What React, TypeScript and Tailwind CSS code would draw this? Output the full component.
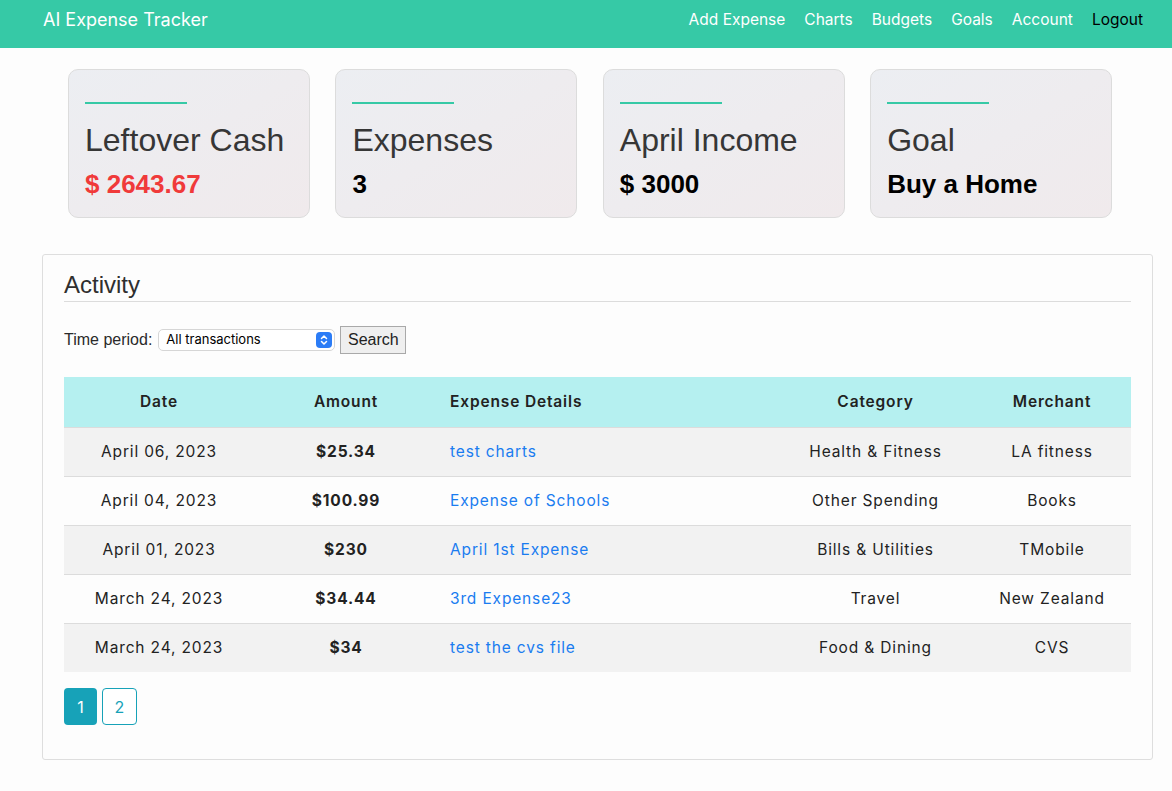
import React from 'react';

type Expense = {
  date: string;
  amount: string;
  details: string;
  category: string;
  merchant: string;
};

const expenses: Expense[] = [
  { date: 'April 06, 2023', amount: '$25.34', details: 'test charts', category: 'Health & Fitness', merchant: 'LA fitness' },
  { date: 'April 04, 2023', amount: '$100.99', details: 'Expense of Schools', category: 'Other Spending', merchant: 'Books' },
  { date: 'April 01, 2023', amount: '$230', details: 'April 1st Expense', category: 'Bills & Utilities', merchant: 'TMobile' },
  { date: 'March 24, 2023', amount: '$34.44', details: '3rd Expense23', category: 'Travel', merchant: 'New Zealand' },
  { date: 'March 24, 2023', amount: '$34', details: 'test the cvs file', category: 'Food & Dining', merchant: 'CVS' },
];

const SummaryCard: React.FC<{ title: string; value: string; valueClass?: string }> = ({ title, value, valueClass }) => (
  <div className="w-[242px] h-[149px] rounded-[10px] border border-[#dcdcdc] bg-gradient-to-br from-[#eceef2] to-[#f0eaec] px-[16px] pt-[32px]">
    <div className="w-[102px] h-[2px] bg-[#36c9a6]" />
    <h3 className="mt-[18px] text-[32px] leading-[36px] text-[#363636]">{title}</h3>
    <p className={`mt-[11px] text-[26px] leading-[30px] font-bold ${valueClass ?? 'text-black'}`}>{value}</p>
  </div>
);

export default function App() {
  return (
    <div className="min-h-[791px] bg-[#fdfdfd] font-['Liberation_Sans',Arial,sans-serif]">
      <nav className="h-[48px] bg-[#36c9a6] flex items-center justify-between pl-[43px] pr-[29px]">
        <a className="text-white text-[18px] font-['Inter',sans-serif] -mt-[9px]">AI Expense Tracker</a>
        <ul className="flex gap-[19px] text-[15.5px] font-['Inter',sans-serif] -mt-[8px]">
          <li className="text-white">Add Expense</li>
          <li className="text-white">Charts</li>
          <li className="text-white">Budgets</li>
          <li className="text-white">Goals</li>
          <li className="text-white">Account</li>
          <li className="text-black">Logout</li>
        </ul>
      </nav>

      <div className="flex gap-[25.4px] pl-[68px] mt-[21px]">
        <SummaryCard title="Leftover Cash" value="$ 2643.67" valueClass="text-[#f03a3a]" />
        <SummaryCard title="Expenses" value="3" />
        <SummaryCard title="April Income" value="$ 3000" />
        <SummaryCard title="Goal" value="Buy a Home" />
      </div>

      <section className="mx-[42px] mt-[36px] w-[1111px] h-[506px] border border-[#dedede] rounded-[3px] bg-[#fdfdfd] px-[21px] pt-[15px]">
        <h2 className="text-[24px] leading-[29px] text-[#2f2f2f] pb-[2px] border-b border-[#dcdcdc]">Activity</h2>

        <div className="flex items-center mt-[24px] text-[16px] text-[#2a2a2a]">
          <span className="mr-[6px]">Time period:</span>
          <div className="relative w-[177px] h-[22px] rounded-[5px] border border-[#d6d6d6] bg-white flex items-center pl-[7px] text-[13px] text-black font-['Inter',sans-serif]">
            All transactions
            <span className="absolute right-[2px] top-[2px] w-[16px] h-[16px] rounded-[4px] bg-[#2b7cf6] flex items-center justify-center">
              <svg width="8" height="12" viewBox="0 0 8 12" fill="none" stroke="white" strokeWidth="1.5" strokeLinecap="round" strokeLinejoin="round">
                <path d="M1.5 4.5 L4 2 L6.5 4.5" />
                <path d="M1.5 7.5 L4 10 L6.5 7.5" />
              </svg>
            </span>
          </div>
          <button className="ml-[5px] h-[28px] w-[66px] border border-[#a9a9a9] bg-[#efefef] text-[16px] text-[#222]">Search</button>
        </div>

        <table className="mt-[23px] w-[1067px] border-collapse font-['Inter',sans-serif] text-[15.5px] tracking-[0.85px] text-[#222]">
          <thead>
            <tr className="h-[50px] bg-[#b5f0f0] border-b border-[#dcdcdc]">
              <th className="w-[190px] font-semibold text-center">Date</th>
              <th className="w-[184px] font-semibold text-center">Amount</th>
              <th className="w-[340px] font-semibold text-left pl-[12px]">Expense Details</th>
              <th className="w-[195px] font-semibold text-center">Category</th>
              <th className="font-semibold text-center">Merchant</th>
            </tr>
          </thead>
          <tbody>
            {expenses.map((e, i) => (
              <tr key={i} className={`h-[49px] ${i % 2 === 0 ? 'bg-[#f2f2f2]' : 'bg-[#fdfdfd]'} ${i < expenses.length - 1 ? 'border-b border-[#dcdcdc]' : ''}`}>
                <td className="text-center">{e.date}</td>
                <td className="text-center font-bold">{e.amount}</td>
                <td className="text-left pl-[12px] text-[#1a7cf0]">{e.details}</td>
                <td className="text-center">{e.category}</td>
                <td className="text-center">{e.merchant}</td>
              </tr>
            ))}
          </tbody>
        </table>

        <div className="flex gap-[5px] mt-[16px] font-['Inter',sans-serif] text-[16px]">
          <button className="w-[33px] h-[37px] rounded-[4px] bg-[#17a2b8] text-white">1</button>
          <button className="w-[35px] h-[37px] rounded-[4px] border border-[#17a2b8] text-[#17a2b8] bg-white">2</button>
        </div>
      </section>
    </div>
  );
}
